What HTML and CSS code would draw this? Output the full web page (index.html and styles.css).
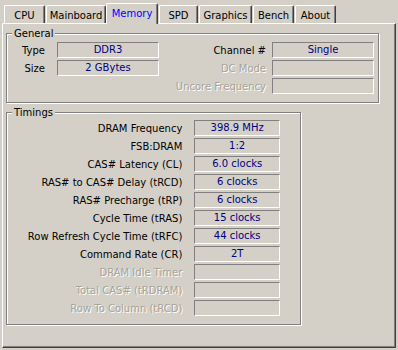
FILE: index.html
```html
<!DOCTYPE html>
<html>
<head>
  <title>CPU-Z Memory</title>
  <link rel="stylesheet" href="styles.css">
</head>
<body>
  <div class="tabs">
    <div class="tab tab-cpu">CPU</div>
    <div class="tab tab-mainboard">Mainboard</div>
    <div class="tab tab-memory active">Memory</div>
    <div class="tab tab-spd">SPD</div>
    <div class="tab tab-graphics">Graphics</div>
    <div class="tab tab-bench">Bench</div>
    <div class="tab tab-about">About</div>
  </div>

  <div class="panel">
    <div class="group general">
      <span class="group-title">General</span>
      <div class="gcol">
        <div class="row"><span class="lbl lbl-left">Type</span><span class="field field-general">DDR3</span></div>
        <div class="row"><span class="lbl lbl-left">Size</span><span class="field field-general">2 GBytes</span></div>
      </div>
      <div class="gcol gcol-right">
        <div class="row"><span class="lbl lbl-right">Channel #</span><span class="field field-general">Single</span></div>
        <div class="row"><span class="lbl lbl-right dis">DC Mode</span><span class="field field-general"></span></div>
        <div class="row"><span class="lbl lbl-right dis">Uncore Frequency</span><span class="field field-general"></span></div>
      </div>
    </div>

    <div class="group timings">
      <span class="group-title">Timings</span>
      <div class="row"><span class="lbl lbl-timing">DRAM Frequency</span><span class="field field-timing">398.9 MHz</span></div>
      <div class="row"><span class="lbl lbl-timing">FSB:DRAM</span><span class="field field-timing">1:2</span></div>
      <div class="row"><span class="lbl lbl-timing">CAS# Latency (CL)</span><span class="field field-timing">6.0 clocks</span></div>
      <div class="row"><span class="lbl lbl-timing">RAS# to CAS# Delay (tRCD)</span><span class="field field-timing">6 clocks</span></div>
      <div class="row"><span class="lbl lbl-timing">RAS# Precharge (tRP)</span><span class="field field-timing">6 clocks</span></div>
      <div class="row"><span class="lbl lbl-timing">Cycle Time (tRAS)</span><span class="field field-timing">15 clocks</span></div>
      <div class="row"><span class="lbl lbl-timing">Row Refresh Cycle Time (tRFC)</span><span class="field field-timing">44 clocks</span></div>
      <div class="row"><span class="lbl lbl-timing">Command Rate (CR)</span><span class="field field-timing">2T</span></div>
      <div class="row"><span class="lbl lbl-timing dis">DRAM Idle Timer</span><span class="field field-timing"></span></div>
      <div class="row"><span class="lbl lbl-timing dis">Total CAS# (tRDRAM)</span><span class="field field-timing"></span></div>
      <div class="row"><span class="lbl lbl-timing dis">Row To Column (tRCD)</span><span class="field field-timing"></span></div>
    </div>
  </div>
</body>
</html>
```

FILE: styles.css
```css
body {
  margin: 0;
  width: 398px;
  height: 350px;
  overflow: hidden;
  background: #d4d0c8;
  color: #000;
  font-family: "DejaVu Sans", Tahoma, sans-serif;
  font-size: 10px;
}

/* tab strip */
.tabs {
  display: flex;
  align-items: flex-end;
  height: 20px;
  margin-top: 3px;
  padding-left: 4px;
  position: relative;
  z-index: 1;
}
.tab {
  box-sizing: border-box;
  height: 18px;
  margin-right: 1px;
  padding-top: 1px;
  border: 1px solid #fff;
  border-bottom: none;
  border-right-color: #404040;
  border-radius: 2px 2px 0 0;
  box-shadow: inset -1px 0 0 #808080;
  display: flex;
  align-items: center;
  justify-content: center;
  background: #d4d0c8;
}
.tab.active {
  height: 21px;
  margin-bottom: -1px;
  padding-top: 0;
  padding-bottom: 2px;
  color: #0000ff;
}
.tab-cpu { width: 41px; }
.tab-mainboard { width: 60px; margin-right: 0; }
.tab-memory { width: 52px; }
.tab-spd { width: 39px; }
.tab-graphics { width: 53px; }
.tab-bench { width: 41px; }
.tab-about { width: 41px; }

/* main page */
.panel {
  box-sizing: border-box;
  width: 394px;
  height: 325px;
  margin-left: 2px;
  padding: 9px 3px 0 3px;
  border: 1px solid;
  border-color: #fff #404040 #404040 #fff;
  box-shadow: inset -1px -1px 0 #808080;
}

.group {
  position: relative;
  box-sizing: border-box;
  border: 1px solid #808080;
  box-shadow: 1px 1px 0 #fff, inset 1px 1px 0 #fff;
}
.group-title {
  position: absolute;
  top: -7px;
  left: 5px;
  padding: 0 2px;
  line-height: 13px;
  background: #d4d0c8;
}

.general {
  width: 373px;
  display: flex;
  padding: 8px 4px 8px 1px;
}
.gcol-right {
  margin-left: auto;
}
.timings {
  width: 295px;
  margin-top: 9px;
  padding: 7px 20px 8px 1px;
}

.row {
  display: flex;
  align-items: center;
  height: 16px;
  margin-bottom: 2px;
}
.row:last-child {
  margin-bottom: 0;
}

.lbl {
  text-align: right;
  white-space: nowrap;
}
.lbl-left {
  width: 37px;
  margin-right: 12px;
}
.lbl-right {
  width: 100px;
  margin-right: 6px;
}
.lbl-timing {
  width: 175px;
  margin-right: 12px;
}
.dis {
  color: #a7a399;
  text-shadow: 1px 1px 0 #fff;
}

.field {
  box-sizing: border-box;
  height: 16px;
  border: 1px solid;
  border-color: #808080 #fff #fff #808080;
  color: #000080;
  text-align: center;
  line-height: 14px;
}
.field-general { width: 102px; }
.field-timing { width: 86px; }
```
